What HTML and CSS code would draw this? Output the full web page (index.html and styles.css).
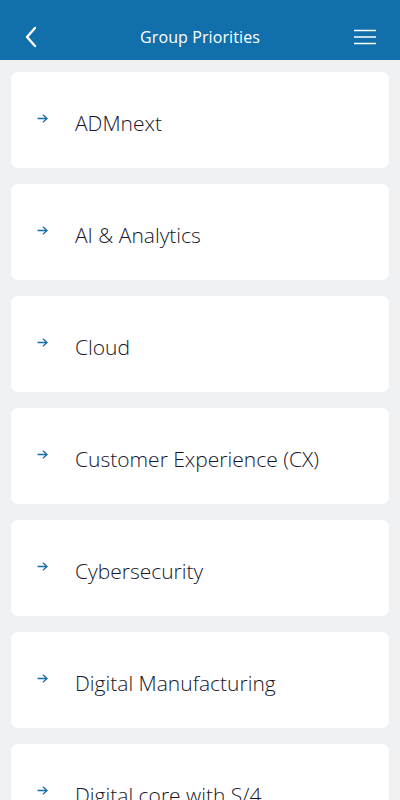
FILE: index.html
```html
<!DOCTYPE html>
<html lang="en">
 <head>
  <meta charset="utf-8">
  <title>Group Priorities</title>
  <link rel="stylesheet" href="styles.css">
 </head>
 <body>
  <header class="topbar">
   <a class="back" href="#">
    <svg width="14" height="22" viewBox="0 0 14 22"><path d="M11 2 L3 11 L11 20" fill="none" stroke="#fff" stroke-width="2.4" stroke-linecap="round" stroke-linejoin="round"/></svg>
   </a>
   <h1>Group Priorities</h1>
   <a class="menu" href="#">
    <svg width="22" height="16" viewBox="0 0 22 16"><path d="M0 1.5 H22 M0 8 H22 M0 14.5 H22" stroke="#fff" stroke-width="1.6"/></svg>
   </a>
  </header>
  <main class="list">
   <a class="item" href="#"><svg class="arrow" width="11" height="9" viewBox="0 0 11 9"><path d="M0.5 4.5 H10 M6 0.8 L10 4.5 L6 8.2" fill="none" stroke="#1170ab" stroke-width="1.3"/></svg><span class="label">ADMnext</span></a>
   <a class="item" href="#"><svg class="arrow" width="11" height="9" viewBox="0 0 11 9"><path d="M0.5 4.5 H10 M6 0.8 L10 4.5 L6 8.2" fill="none" stroke="#1170ab" stroke-width="1.3"/></svg><span class="label">AI &amp; Analytics</span></a>
   <a class="item" href="#"><svg class="arrow" width="11" height="9" viewBox="0 0 11 9"><path d="M0.5 4.5 H10 M6 0.8 L10 4.5 L6 8.2" fill="none" stroke="#1170ab" stroke-width="1.3"/></svg><span class="label">Cloud</span></a>
   <a class="item" href="#"><svg class="arrow" width="11" height="9" viewBox="0 0 11 9"><path d="M0.5 4.5 H10 M6 0.8 L10 4.5 L6 8.2" fill="none" stroke="#1170ab" stroke-width="1.3"/></svg><span class="label">Customer Experience (CX)</span></a>
   <a class="item" href="#"><svg class="arrow" width="11" height="9" viewBox="0 0 11 9"><path d="M0.5 4.5 H10 M6 0.8 L10 4.5 L6 8.2" fill="none" stroke="#1170ab" stroke-width="1.3"/></svg><span class="label">Cybersecurity</span></a>
   <a class="item" href="#"><svg class="arrow" width="11" height="9" viewBox="0 0 11 9"><path d="M0.5 4.5 H10 M6 0.8 L10 4.5 L6 8.2" fill="none" stroke="#1170ab" stroke-width="1.3"/></svg><span class="label">Digital Manufacturing</span></a>
   <a class="item" href="#"><svg class="arrow" width="11" height="9" viewBox="0 0 11 9"><path d="M0.5 4.5 H10 M6 0.8 L10 4.5 L6 8.2" fill="none" stroke="#1170ab" stroke-width="1.3"/></svg><span class="label">Digital core with S/4</span></a>
  </main>
 </body>
</html>
```

FILE: styles.css
```css
html, body {
  margin:0; padding:0;
  background:#eef0f1;
  font-family:"Open Sans", "Noto Sans", sans-serif;
}
.topbar {
  height:60px; box-sizing:border-box;
  background:#1170ab;
  display:flex; align-items:center; justify-content:space-between;
  padding:14px 24px 0 24px;
}
.topbar h1 {
  margin:0; color:#fff;
  font-size:16px; font-weight:400; letter-spacing:0.1px;
}
.back, .menu { display:flex; align-items:center; width:22px; }
.list {
  display:flex; flex-direction:column; gap:16px;
  padding:12px 11px;
}
.item {
  display:flex; align-items:center;
  height:96px; box-sizing:border-box;
  background:#fff; border-radius:7px;
  padding-left:26px;
  text-decoration:none;
}
.arrow {
  flex:none; margin:-3px 27px 0 0;
}
.label {
  padding-top:5px;
  font-size:21px; font-weight:300; color:#16162a;
}
```
